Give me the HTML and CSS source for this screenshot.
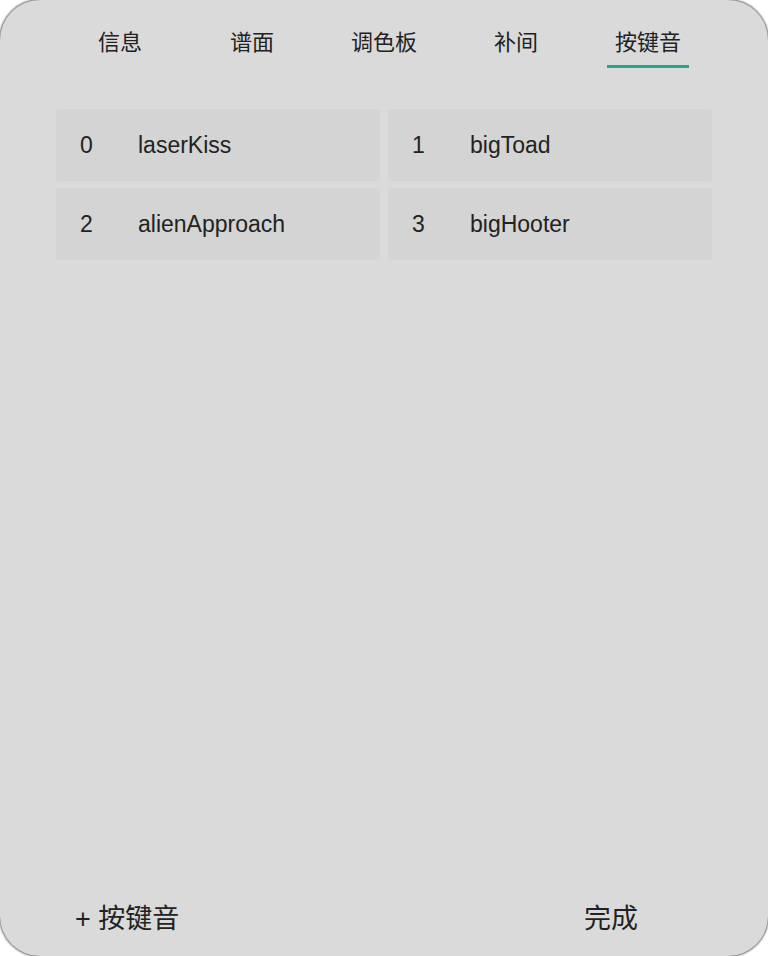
FILE: index.html
```html
<!DOCTYPE html>
<html lang="zh">
<head>
<meta charset="utf-8">
<link rel="stylesheet" href="styles.css">
</head>
<body>
<div class="panel">
  <nav class="tabs">
    <div class="tab">信息</div>
    <div class="tab">谱面</div>
    <div class="tab">调色板</div>
    <div class="tab">补间</div>
    <div class="tab active">按键音</div>
  </nav>
  <div class="grid">
    <div class="card"><span class="num">0</span><span class="name">laserKiss</span></div>
    <div class="card"><span class="num">1</span><span class="name">bigToad</span></div>
    <div class="card"><span class="num">2</span><span class="name">alienApproach</span></div>
    <div class="card"><span class="num">3</span><span class="name">bigHooter</span></div>
  </div>
  <footer class="footer">
    <div class="add">+ 按键音</div>
    <div class="done">完成</div>
  </footer>
</div>
</body>
</html>
```
FILE: styles.css
```css
html, body {
  margin: 0;
  padding: 0;
  background: #ffffff;
}
.panel {
  box-sizing: border-box;
  width: 768px;
  height: 956px;
  background: #dadada;
  border-radius: 40px;
  box-shadow: 0 0 2px 1px rgba(0, 0, 0, 0.55);
  display: flex;
  flex-direction: column;
  font-family: "Liberation Sans", "Noto Sans CJK SC", sans-serif;
  color: #222;
  overflow: hidden;
}
.tabs {
  display: flex;
  padding: 0 54px;
  height: 68px;
}
.tab {
  width: 132px;
  text-align: center;
  font-size: 22px;
  line-height: 22px;
  padding-top: 32px;
  position: relative;
}
.tab.active::after {
  content: "";
  position: absolute;
  left: 25px;
  right: 25px;
  top: 65px;
  height: 3px;
  background: #22a884;
}
.grid {
  display: grid;
  grid-template-columns: 324px 324px;
  column-gap: 8px;
  row-gap: 7px;
  padding: 41px 0 0 56px;
}
.card {
  height: 72px;
  background: #d4d4d4;
  border-radius: 3px;
  display: flex;
  align-items: center;
  font-size: 23px;
}
.num {
  width: 82px;
  padding-left: 24px;
  box-sizing: border-box;
}
.footer {
  margin-top: auto;
  display: flex;
  justify-content: space-between;
  align-items: center;
  height: 80px;
  padding: 0 130px 0 75px;
  font-size: 27px;
}
```
